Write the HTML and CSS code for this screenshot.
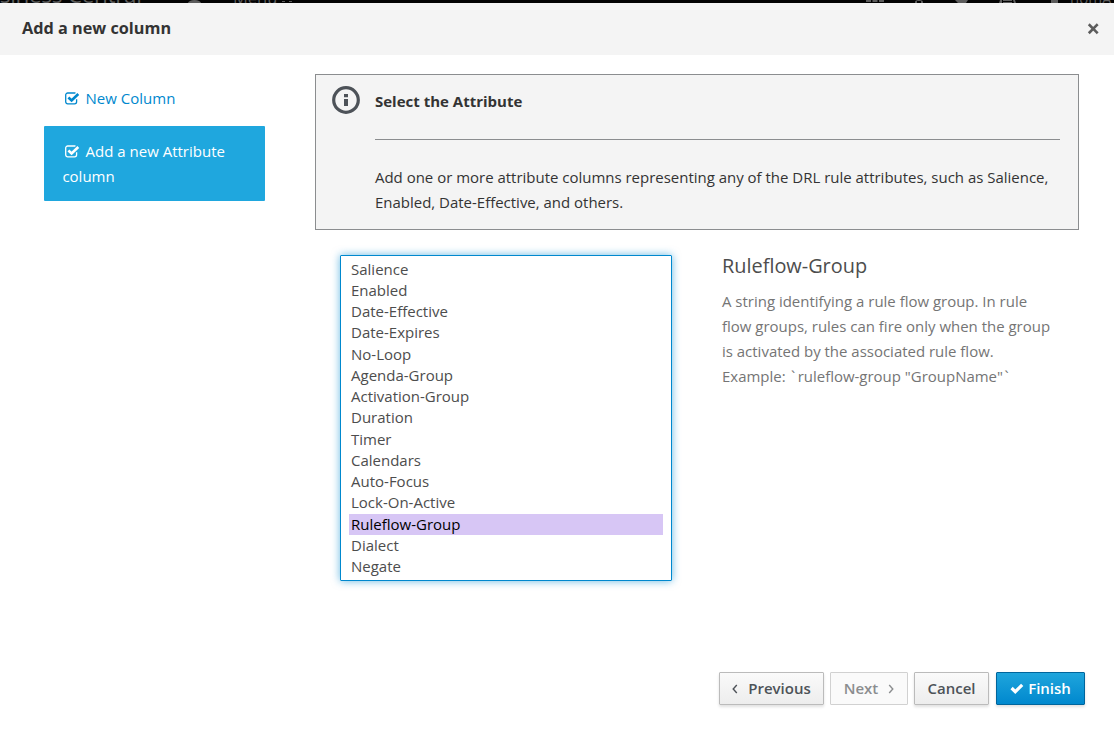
FILE: index.html
```html
<!DOCTYPE html>
<html lang="en">
<head>
<meta charset="utf-8">
<title>Add a new column</title>
<link rel="stylesheet" href="styles.css">
</head>
<body>
<div class="navbar">
  <span class="brand">Business Central</span>
  <span class="home"></span>
  <span class="menu">Menu</span>
  <svg class="menu-caret" width="12" height="3" viewBox="0 0 12 3" fill="currentColor"><path d="M1 1h3v1H1zM8 1h3v1H8z"/></svg>
  <svg class="nav-icons" width="248" height="3" viewBox="866 0 248 3" fill="currentColor">
    <path d="M866 0h5v2h-5zM872.5 0h5v2h-5zM879 0h5v2h-5zM915 2q0-2 4-2t4 2v1h-2V1h-4v2h-2zM955 0h13l-2 3h-8zM999 3l1-3h2v3zM1014 3l-1-3h2l1 3zM1003 0h9v1h-9zM1003 2h9v1h-9zM1051 0h7v3h-7z"/>
  </svg>
  <span class="user">nomA</span>
</div>
<div class="modal">
  <header class="modal-header">
    <h4 class="modal-title">Add a new column</h4>
    <svg class="close" width="12" height="12" viewBox="0 0 12 12"><path d="M2.7 2.2 9.8 9.3M9.8 2.2 2.7 9.3"/></svg>
  </header>
  <main class="modal-body">
    <nav class="steps">
      <a class="step"><svg class="check-box" width="15" height="13" viewBox="0 0 15 13"><path class="box" d="M11.6 7.2v2.6a2 2 0 0 1-2 2H2.7a2 2 0 0 1-2-2V3a2 2 0 0 1 2-2h6.9q.5 0 .9.2"/><path class="tick" d="M3.4 5.5 6.6 8.5 13.3 2"/></svg>New Column</a>
      <a class="step active"><svg class="check-box" width="15" height="13" viewBox="0 0 15 13"><path class="box" d="M11.6 7.2v2.6a2 2 0 0 1-2 2H2.7a2 2 0 0 1-2-2V3a2 2 0 0 1 2-2h6.9q.5 0 .9.2"/><path class="tick" d="M3.4 5.5 6.6 8.5 13.3 2"/></svg>Add a new Attribute column</a>
    </nav>
    <section class="content">
      <div class="info">
        <svg class="info-icon" width="28" height="28" viewBox="0 0 28 28"><circle cx="14" cy="14" r="12.3"/><path d="M12 8h4v3.3h-4zM12 13h4v7h-4z"/></svg>
        <div class="info-text">
          <h5 class="info-title">Select the Attribute</h5>
          <p class="info-description">Add one or more attribute columns representing any of the DRL rule attributes, such as Salience, Enabled, Date-Effective, and others.</p>
        </div>
      </div>
      <div class="selection">
        <ul class="attributes">
          <li>Salience</li>
          <li>Enabled</li>
          <li>Date-Effective</li>
          <li>Date-Expires</li>
          <li>No-Loop</li>
          <li>Agenda-Group</li>
          <li>Activation-Group</li>
          <li>Duration</li>
          <li>Timer</li>
          <li>Calendars</li>
          <li>Auto-Focus</li>
          <li>Lock-On-Active</li>
          <li class="selected">Ruleflow-Group</li>
          <li>Dialect</li>
          <li>Negate</li>
        </ul>
        <article class="details">
          <h3 class="details-title">Ruleflow-Group</h3>
          <p class="details-text">A string identifying a rule flow group. In rule flow groups, rules can fire only when the group is activated by the associated rule flow.<br>Example: <span class="tick-mark">`</span>ruleflow-group "GroupName"<span class="tick-mark">`</span></p>
        </article>
      </div>
    </section>
  </main>
  <footer class="modal-footer">
    <button class="btn previous"><svg width="6" height="10" viewBox="0 0 6 10"><path d="M4.8 1 1.2 5l3.6 4"/></svg>Previous</button>
    <button class="btn next" disabled>Next<svg width="6" height="10" viewBox="0 0 6 10"><path d="M1.2 1l3.6 4-3.6 4"/></svg></button>
    <button class="btn cancel">Cancel</button>
    <button class="btn primary"><svg width="14" height="11" viewBox="0 0 14 11"><path d="M1.6 5 5.3 8.7 12.2 1.9"/></svg>Finish</button>
  </footer>
</div>
</body>
</html>
```

FILE: styles.css
```css
* { box-sizing: border-box; }
body {
  margin: 0;
  height: 741px;
  overflow: hidden;
  background: #fff;
  color: #333;
  font: 15px/25px "Open Sans", sans-serif;
}
h3, h4, h5, p, ul { margin: 0; padding: 0; }

.navbar {
  display: flex;
  align-items: flex-start;
  height: 3px;
  overflow: hidden;
  background: #030303;
  color: #5c5c5c;
}
.brand {
  width: 187px;
  margin-top: -20px;
  margin-left: -28px;
  margin-right: 29px;
  font-size: 22.5px;
  font-weight: 400;
  line-height: 30px;
  letter-spacing: -.3px;
  white-space: nowrap;
}
.home { width: 13px; height: 6px; border-radius: 50%; background: #5c5c5c; }
.menu { margin-left: 32px; margin-top: -14px; font-size: 16.5px; line-height: 24px; }
.menu-caret { flex: none; margin-left: 4px; }
.nav-icons { flex: none; margin-left: auto; margin-right: -44px; }
.user { flex: none; width: 44px; margin-top: -14px; line-height: 24px; }

.modal { display: flex; flex-direction: column; height: 738px; }
.modal-header {
  display: flex;
  justify-content: space-between;
  height: 52px;
  padding: 13px 15px 0 22px;
  background: #f4f4f4;
}
.modal-title { font-size: 16.25px; line-height: 25px; font-weight: 700; }
.close { margin-top: 7px; stroke: #5c5c5c; stroke-width: 2.6; stroke-linecap: square; }

.modal-body { display: flex; flex: 1; padding: 19px 35px 0 44px; }
.steps { width: 221px; margin-right: 50px; }
.step {
  display: block;
  padding: 12px 18.4px;
  margin-bottom: 3px;
  border-radius: 1px;
  color: #0088ce;
}
.step.active { background: #1fa7de; color: #fff; padding: 13px 18.4px 12px; }
.check-box { margin: 0 5.6px -1px 2.6px; fill: none; stroke: currentColor; }
.box { stroke-width: 1.3; }
.tick { stroke-width: 2.6; }

.content { flex: 1; }
.info {
  display: flex;
  height: 156px;
  padding: 11px 18px 0 16px;
  border: 1px solid #8b8d8f;
  background: #f4f4f4;
}
.info-icon { flex: none; margin-right: 15px; fill: #4d5258; }
.info-icon circle { fill: none; stroke: #4d5258; stroke-width: 3.2; }
.info-text { flex: 1; }
.info-title {
  height: 54px;
  padding-top: 3px;
  margin-bottom: 25px;
  border-bottom: 1px solid #8b8d8f;
  font-size: 15px;
  font-weight: 700;
}
.info-description { font-size: 14.98px; }

.selection { display: flex; padding: 25px 0 0 25px; }
.attributes {
  width: 332px;
  height: 326px;
  padding: 2.6px 8px;
  border: 1px solid #0088ce;
  border-radius: 1px;
  box-shadow: 0 0 8px rgba(0, 136, 206, .6);
  color: #4d4d4d;
  list-style: none;
  line-height: 21.25px;
}
.attributes li { padding-left: 2px; }
.attributes .selected { background: #d7c6f5; color: #000; }
.details { width: 333px; margin-left: 50px; }
.details-title { color: #4d4d4d; font-size: 19.9px; font-weight: 400; line-height: 22px; }
.details-text { margin-top: 12px; color: #757575; font-size: 14.97px; }
.tick-mark { padding: 0 2.5px 0 1.5px; }

.modal-footer { display: flex; padding: 0 29px 36px 719px; }
.btn {
  display: flex;
  flex: none;
  align-items: center;
  justify-content: center;
  height: 33px;
  padding: 0;
  border: 1px solid #bbb;
  border-radius: 1px;
  background: linear-gradient(#fafafa, #ededed);
  box-shadow: 0 2px 3px rgba(3, 3, 3, .12);
  color: #4d5258;
  font: 600 15px/23px "Open Sans", sans-serif;
}
.btn svg { fill: none; stroke: currentColor; stroke-width: 1.4; }
.previous { width: 105px; gap: 10px; margin-right: 6px; }
.next { width: 78px; gap: 10px; margin-right: 6px; background: #fafafa; border-color: #d1d1d1; box-shadow: none; color: #8b8d8f; }
.cancel { width: 75px; margin-right: 7px; }
.primary {
  width: 89px;
  gap: 4px;
  border-color: #00659c;
  background: linear-gradient(#1fa5dc, #0088ce);
  color: #fff;
}
.primary svg { stroke-width: 3.2; }
```
